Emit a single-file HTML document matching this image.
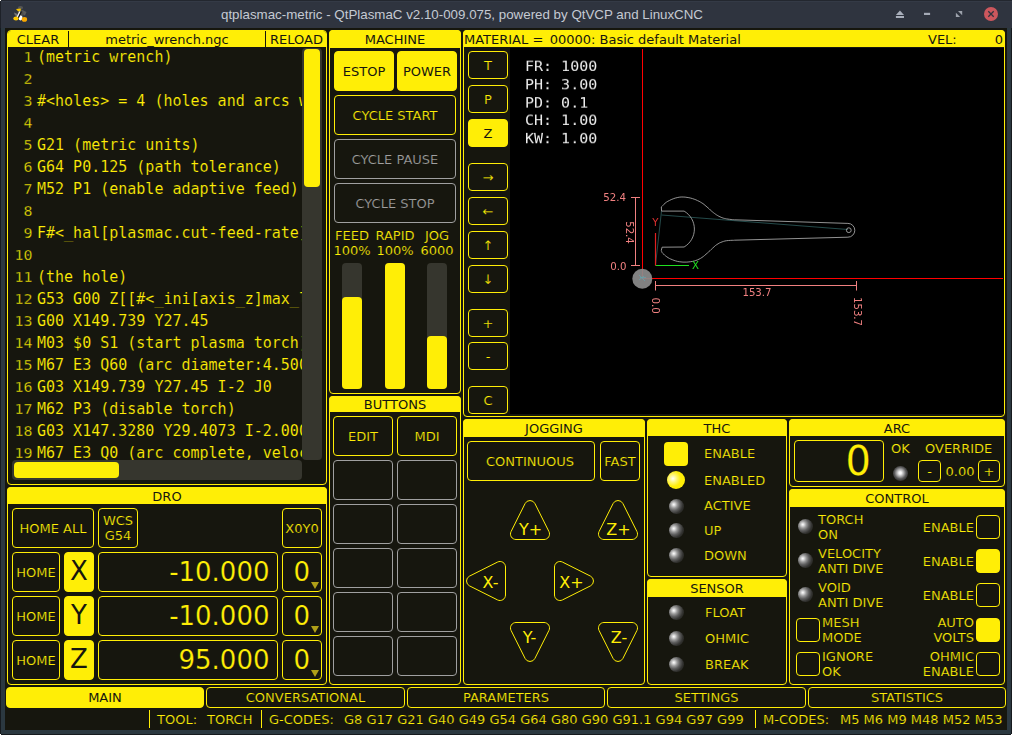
<!DOCTYPE html>
<html lang="en"><head><meta charset="utf-8"><title>qtplasmac-metric</title>
<style>
*{box-sizing:border-box;margin:0;padding:0}
html,body{width:1012px;height:735px;overflow:hidden;background:#2b3840}
body{-webkit-text-stroke:0.2px #16160e;position:relative;font-family:"DejaVu Sans","Liberation Sans",sans-serif;font-size:13px;color:#ffee06}
.a{position:absolute}
#tb{left:0;top:0;width:1012px;height:28px;background:#2f343f}
#title{-webkit-text-stroke:0;left:0;top:0;width:924px;height:28px;line-height:30px;text-align:center;color:#c5cad3;font-family:"Liberation Sans",sans-serif;font-size:13.33px}
#win{left:5px;top:28px;width:1002px;height:702px;background:#16160e}
.p{position:absolute;border:1px solid #ffee06;border-radius:4px}
.h{-webkit-text-stroke-width:0;position:absolute;left:-1px;top:-1px;right:-1px;background:#ffee06;color:#16160e;text-align:center;border-radius:4px 4px 0 0;white-space:pre}
.b{position:absolute;border:1px solid #ffee06;border-radius:4px;color:#ffee06;display:flex;align-items:center;justify-content:center;text-align:center;white-space:pre}
.b.on{background:#ffee06;color:#16160e;-webkit-text-stroke-width:0}
.b.dis{border-color:#a0a0a0;color:#a0a0a0}
.t{position:absolute;white-space:pre;line-height:15px}
.c{text-align:center}
.r{text-align:right}
.led{position:absolute;border-radius:50%;width:15px;height:15px;background:radial-gradient(circle at 32% 37%,#fff 0%,#dadada 10%,#9a9a9a 25%,#5e5e5e 44%,#343432 64%,#1f1f19 85%,#16160e 100%)}
.led.on{width:18px;height:18px;background:radial-gradient(circle at 33% 42%,#fff 0%,#fffcc0 10%,#fff670 25%,#ffee06 50%,#ffee06 100%)}
.code{-webkit-text-stroke-width:0.15px;font-family:"DejaVu Sans Mono","Liberation Mono",monospace;font-size:15px;line-height:22px;white-space:pre}
.ln{-webkit-text-stroke-width:0.35px;color:#f4e406;font-family:"DejaVu Sans Mono","Liberation Mono",monospace;font-size:15px;line-height:25px;white-space:pre;text-align:right;transform:scaleY(0.88);transform-origin:0 0}
</style></head>
<body>
<div class="a" id="tb"><div class="a" style="left:0;top:0;width:1012px;height:1px;background:#23272f"></div><div class="a" style="left:0;top:1px;width:1012px;height:1px;background:#343a46"></div><div class="a" style="left:0;top:0;width:1px;height:28px;background:#1d2128"></div><div class="a" style="left:0;top:0;width:1px;height:1px;background:#fff"></div><div class="a" id="title">qtplasmac-metric - QtPlasmaC v2.10-009.075, powered by QtVCP and LinuxCNC</div><svg class="a" style="left:0;top:0" width="40" height="28" viewBox="0 0 40 28">
<ellipse cx="20.5" cy="7.8" rx="2.6" ry="1.8" fill="#555"/>
<path d="M21.5 9.5 L26.5 12 L25 15.5 L21.5 14Z" fill="#5a5a5a"/>
<path d="M14 12.5 L17.5 14 L17 16.5 L14.8 15Z" fill="#777"/>
<ellipse cx="20.5" cy="14.5" rx="3" ry="4.5" fill="#4c4c4c"/>
<ellipse cx="20.5" cy="17.8" rx="2" ry="2.6" fill="#fff"/>
<path d="M16 9 L20.6 8.6 L21 10.6 L18.2 11.6Z" fill="#f5c400"/>
<path d="M17 17.5 L20 11.5" stroke="#f0f0f0" stroke-width="1.6"/>
<path d="M17.6 19.6 L21.4 11.6" stroke="#111" stroke-width="1.2"/>
<ellipse cx="16" cy="18.6" rx="2.7" ry="2" fill="#ffc800"/>
<ellipse cx="24.4" cy="19.4" rx="2.7" ry="2.3" fill="#f9a800"/>
</svg><svg class="a" style="left:881px;top:0" width="131" height="28" viewBox="0 0 131 28">
<path d="M14.9 15.1 L18.95 10.6 L23 15.1Z" fill="#a9afbb"/><rect x="14.9" y="16" width="8.1" height="2" fill="#a9afbb"/>
<rect x="43" y="12.8" width="6.1" height="2.2" fill="#a4aab6"/>
<path d="M76.98 11.07 L81.2 11.07 L81.2 15.16Z" fill="#9ea3ad"/><path d="M74.9 12.84 L74.9 17.06 L79.16 17.06Z" fill="#9ea3ad"/>
<circle cx="110" cy="14" r="7" fill="#cc575d"/>
<path d="M107.3 11.3 L112.7 16.7 M112.7 11.3 L107.3 16.7" stroke="#2f343f" stroke-width="1.3"/>
</svg></div>
<div class="a" id="win"></div>
<div class="a" style="left:0;top:28px;width:1px;height:707px;background:#161a1e"></div><div class="a" style="left:0;top:734px;width:1012px;height:1px;background:#161a1e"></div><div class="a" style="left:1011px;top:28px;width:1px;height:707px;background:#161a1e"></div><div class="a" style="left:0;top:734px;width:1px;height:1px;background:#fff"></div><div class="a" style="left:1011px;top:734px;width:1px;height:1px;background:#fff"></div>
<div class="p" style="left:7px;top:30px;width:320px;height:455px;overflow:hidden"><div class="h" style="height:17px;line-height:17px"></div><div class="a" style="left:60px;top:0;width:1px;height:17px;background:#16160e"></div><div class="a" style="left:257px;top:0;width:1px;height:17px;background:#16160e"></div><div class="t c" style="left:0;top:0;width:60px;color:#16160e;-webkit-text-stroke-width:0;line-height:17px">CLEAR</div><div class="t c" style="left:61px;top:0;width:196px;color:#16160e;-webkit-text-stroke-width:0;line-height:17px">metric_wrench.ngc</div><div class="t c" style="left:258px;top:0;width:61px;color:#16160e;-webkit-text-stroke-width:0;line-height:17px">RELOAD</div><div class="a" style="left:0;top:17px;width:293.5px;height:412px;overflow:hidden"><div class="a ln" style="left:0;top:-1.1px;width:24.5px">1
2
3
4
5
6
7
8
9
10
11
12
13
14
15
16
17
18
19</div><div class="a code" style="left:29px;top:-2px">(metric wrench)

#&lt;holes&gt; = 4 (holes and arcs with a diameter less than this get velocity reduction)

G21 (metric units)
G64 P0.125 (path tolerance)
M52 P1 (enable adaptive feed)

F#&lt;_hal[plasmac.cut-feed-rate]&gt; (feed rate from cut parameters)

(the hole)
G53 G00 Z[[#&lt;_ini[axis_z]max_limit&gt; - 5] * 1] (Z just below max height)
G00 X149.739 Y27.45
M03 $0 S1 (start plasma torch)
M67 E3 Q60 (arc diameter:4.500, velocity:60%)
G03 X149.739 Y27.45 I-2 J0
M62 P3 (disable torch)
G03 X147.3280 Y29.4073 I-2.0000 J0.0000
M67 E3 Q0 (arc complete, velocity 100%)</div></div><div class="a" style="left:294px;top:17px;width:20px;height:412px;background:#36362e;border-radius:4px"></div><div class="a" style="left:296px;top:18px;width:16px;height:138px;background:#ffee06;border-radius:4px"></div><div class="a" style="left:4px;top:429px;width:290px;height:20px;background:#36362e;border-radius:4px"></div><div class="a" style="left:5.8px;top:431px;width:105.2px;height:16px;background:#ffee06;border-radius:4px"></div></div>
<div class="p" style="left:329px;top:30px;width:132px;height:364px"><div class="h" style="height:18px;line-height:20px">MACHINE</div></div>
<div class="b on" style="left:334px;top:51px;width:60px;height:40px;">ESTOP</div>
<div class="b on" style="left:397px;top:51px;width:60px;height:40px;">POWER</div>
<div class="b " style="left:334px;top:95px;width:122px;height:40px;">CYCLE START</div>
<div class="b dis" style="left:334px;top:139px;width:122px;height:40px;">CYCLE PAUSE</div>
<div class="b dis" style="left:334px;top:183px;width:122px;height:40px;">CYCLE STOP</div>
<div class="t c" style="left:322px;top:228px;width:60px;">FEED</div>
<div class="t c" style="left:322px;top:243px;width:60px;">100%</div>
<div class="t c" style="left:365px;top:228px;width:60px;">RAPID</div>
<div class="t c" style="left:365px;top:243px;width:60px;">100%</div>
<div class="t c" style="left:407px;top:228px;width:60px;">JOG</div>
<div class="t c" style="left:407px;top:243px;width:60px;">6000</div>
<div class="a" style="left:342px;top:263px;width:20px;height:126px;background:#36362e;border-radius:4px"></div><div class="a" style="left:342px;top:297px;width:20px;height:92px;background:#ffee06;border-radius:4px"></div>
<div class="a" style="left:385px;top:263px;width:20px;height:126px;background:#36362e;border-radius:4px"></div><div class="a" style="left:385px;top:263px;width:20px;height:126px;background:#ffee06;border-radius:4px"></div>
<div class="a" style="left:427px;top:263px;width:20px;height:126px;background:#36362e;border-radius:4px"></div><div class="a" style="left:427px;top:336px;width:20px;height:53px;background:#ffee06;border-radius:4px"></div>
<div class="p" style="left:329px;top:396px;width:132px;height:289px"><div class="h" style="height:16px;line-height:17px">BUTTONS</div></div>
<div class="b " style="left:333px;top:416px;width:60px;height:40px;">EDIT</div>
<div class="b " style="left:397px;top:416px;width:60px;height:40px;">MDI</div>
<div class="b dis" style="left:333px;top:460px;width:60px;height:40px;"></div>
<div class="b dis" style="left:397px;top:460px;width:60px;height:40px;"></div>
<div class="b dis" style="left:333px;top:504px;width:60px;height:40px;"></div>
<div class="b dis" style="left:397px;top:504px;width:60px;height:40px;"></div>
<div class="b dis" style="left:333px;top:548px;width:60px;height:40px;"></div>
<div class="b dis" style="left:397px;top:548px;width:60px;height:40px;"></div>
<div class="b dis" style="left:333px;top:592px;width:60px;height:40px;"></div>
<div class="b dis" style="left:397px;top:592px;width:60px;height:40px;"></div>
<div class="b dis" style="left:333px;top:636px;width:60px;height:40px;"></div>
<div class="b dis" style="left:397px;top:636px;width:60px;height:40px;"></div>
<div class="p" style="left:463px;top:30px;width:542px;height:387px"><div class="h" style="height:17px;line-height:19px;overflow:hidden;text-align:left;padding-left:1px">MATERIAL =</div><div class="t" style="left:85.7px;top:0;color:#16160e;-webkit-text-stroke-width:0;line-height:17px">00000: Basic default Material</div><div class="t" style="left:464px;top:0;color:#16160e;-webkit-text-stroke-width:0;line-height:17px">VEL:</div><div class="t r" style="left:499px;top:0;width:40px;color:#16160e;-webkit-text-stroke-width:0;line-height:17px">0</div><div class="a" style="left:46px;top:17px;width:494px;height:366px;background:#000" id="pv"></div></div>
<div class="b " style="left:468px;top:51px;width:40px;height:28px;">T</div>
<div class="b " style="left:468px;top:85px;width:40px;height:28px;">P</div>
<div class="b on" style="left:468px;top:119px;width:40px;height:28px;">Z</div>
<div class="b " style="left:468px;top:163px;width:40px;height:28px;">→</div>
<div class="b " style="left:468px;top:197px;width:40px;height:28px;">←</div>
<div class="b " style="left:468px;top:231px;width:40px;height:28px;">↑</div>
<div class="b " style="left:468px;top:265px;width:40px;height:28px;">↓</div>
<div class="b " style="left:468px;top:309px;width:40px;height:28px;">+</div>
<div class="b " style="left:468px;top:342px;width:40px;height:28px;">-</div>
<div class="b " style="left:468px;top:386px;width:40px;height:28px;">C</div>
<div class="a" style="left:525px;top:57.7px;color:#ececec;-webkit-text-stroke:0;will-change:transform;font-family:'DejaVu Sans Mono','Liberation Mono',monospace;font-size:15px;line-height:20.8px;white-space:pre;transform:scaleY(0.87);transform-origin:0 0">FR: 1000
PH: 3.00
PD: 0.1
CH: 1.00
KW: 1.00</div>
<svg class="a" style="left:510px;top:49px" width="493" height="365" viewBox="510 49 493 365">
<path d="M642.5 49 V278.5 H1003" fill="none" stroke="#ff0000" stroke-width="1"/>
<path d="M655.5 265 L661.5 211 M661.5 215 L848 229.5" fill="none" stroke="#285252" stroke-width="0.9"/>
<path d="M661.3 207.0 L662.0 206.4 L662.8 205.5 L663.8 204.4 L665.0 203.3 L666.4 202.2 L667.8 201.3 L669.4 200.5 L671.2 199.6 L673.2 198.8 L675.2 198.1 L677.2 197.6 L679.2 197.2 L681.1 197.0 L683.1 197.0 L685.1 197.1 L687.0 197.4 L688.9 197.7 L690.7 198.1 L692.5 198.6 L694.2 199.2 L695.9 199.8 L697.5 200.6 L699.1 201.3 L700.5 202.1 L701.8 202.9 L702.9 203.6 L704.0 204.4 L705.0 205.3 L706.0 206.1 L707.0 207.0 L708.1 207.9 L709.2 208.9 L710.2 209.9 L711.3 210.9 L712.4 211.8 L713.5 212.7 L714.6 213.5 L715.7 214.3 L716.7 215.0 L717.8 215.6 L718.9 216.3 L720.0 216.8 L721.1 217.3 L722.1 217.7 L723.2 218.1 L724.3 218.4 L725.4 218.6 L726.6 218.9 L728.0 219.1 L729.5 219.3 L731.1 219.5 L732.5 219.6 L733.8 219.7 L734.7 219.8 L847.9 223.4 A6.9 6.9 0 0 1 847.9 237.2 L734.7 240.2 L733.6 240.3 L732.1 240.3 L730.3 240.4 L728.4 240.5 L726.5 240.7 L724.9 241.0 L723.5 241.4 L722.1 241.9 L720.8 242.4 L719.4 243.0 L718.1 243.8 L716.8 244.6 L715.4 245.6 L714.1 246.8 L712.7 248.1 L711.3 249.4 L710.0 250.7 L708.6 251.9 L707.3 253.1 L706.0 254.2 L704.7 255.4 L703.3 256.5 L701.9 257.5 L700.5 258.4 L699.0 259.2 L697.4 259.9 L695.8 260.5 L694.2 261.0 L692.5 261.4 L690.7 261.7 L688.9 261.9 L686.9 262.1 L685.0 262.1 L683.0 262.1 L681.0 261.9 L679.2 261.7 L677.4 261.4 L675.7 260.9 L674.0 260.4 L672.4 259.7 L670.8 259.1 L669.4 258.4 L668.1 257.7 L666.8 256.8 L665.6 255.9 L664.6 255.1 L663.7 254.2 L662.9 253.5 L662.3 252.8 L661.9 252.2 L661.7 251.6 L661.5 251.1 L661.4 250.6 L661.3 250.3 L662.1 247.2 L684.1 247.0 A20.8 20.8 0 0 0 684.1 211.1 L661.6 211.1 Z" fill="none" stroke="#acacac" stroke-width="0.85"/>
<circle cx="848.8" cy="230.2" r="2.4" fill="none" stroke="#acacac" stroke-width="0.85"/>
<path d="M655.5 265.5 H689" stroke="#20e020" stroke-width="1.2" fill="none"/>
<path d="M655.5 265.5 V233" stroke="#e02020" stroke-width="1.2" fill="none"/>
<g stroke="#f08080" stroke-width="1" fill="none"><path d="M635.5 197.5 V265.5 M631 197.5 H640 M631 265.5 H640 M655.5 285.5 H856.5 M655.5 281 V290.5 M856.5 281 V290.5"/></g>
<g fill="#f08080" font-family="DejaVu Sans,Liberation Sans,sans-serif" font-size="10.2px"><text x="626" y="201" text-anchor="end">52.4</text><text x="626.5" y="269.5" text-anchor="end">0.0</text><text x="757" y="295.5" text-anchor="middle">153.7</text><text transform="translate(625.5 232.5) rotate(90)" text-anchor="middle">52.4</text><text transform="translate(652 305.5) rotate(90)" text-anchor="middle">0.0</text><text transform="translate(853.5 311.5) rotate(90)" text-anchor="middle">153.7</text></g>
<text x="655.3" y="226" text-anchor="middle" fill="#e03030" font-family="DejaVu Sans,Liberation Sans,sans-serif" font-size="10.2px">Y</text><text x="695.5" y="269" text-anchor="middle" fill="#20e020" font-family="DejaVu Sans,Liberation Sans,sans-serif" font-size="10.2px">X</text>
<circle cx="642.3" cy="278.8" r="10" fill="#8c8c8c" fill-opacity="0.92"/>
<path d="M639 275 L645 281 M639 280 L644 276 M640 277.5 H646" stroke="#6aa0a8" stroke-width="0.8" fill="none"/>
</svg>
<div class="p" style="left:463px;top:419px;width:182px;height:266px"><div class="h" style="height:18px;line-height:20px">JOGGING</div></div>
<div class="b " style="left:467px;top:441px;width:128px;height:40px;padding-right:2px">CONTINUOUS</div>
<div class="b " style="left:600px;top:441px;width:40px;height:40px;">FAST</div>
<svg class="a" style="left:463px;top:490px" width="182" height="180" viewBox="463 490 182 180">
<g fill="none" stroke="#ffee06" stroke-width="1">
<path d="M525.08 503.57 A5.5 5.5 0 0 1 534.92 503.57 L548.93 531.54 A5.5 5.5 0 0 1 544.01 539.50 L515.99 539.50 A5.5 5.5 0 0 1 511.07 531.54 Z"/>
<path d="M613.08 503.57 A5.5 5.5 0 0 1 622.92 503.57 L636.93 531.54 A5.5 5.5 0 0 1 632.01 539.50 L603.99 539.50 A5.5 5.5 0 0 1 599.07 531.54 Z"/>
<path d="M469.57 585.92 A5.5 5.5 0 0 1 469.57 576.08 L497.54 562.07 A5.5 5.5 0 0 1 505.50 566.99 L505.50 595.01 A5.5 5.5 0 0 1 497.54 599.93 Z"/>
<path d="M554.50 566.99 A5.5 5.5 0 0 1 562.46 562.07 L590.43 576.08 A5.5 5.5 0 0 1 590.43 585.92 L562.46 599.93 A5.5 5.5 0 0 1 554.50 595.01 Z"/>
<path d="M511.07 630.46 A5.5 5.5 0 0 1 515.99 622.50 L544.01 622.50 A5.5 5.5 0 0 1 548.93 630.46 L534.92 658.43 A5.5 5.5 0 0 1 525.08 658.43 Z"/>
<path d="M599.07 630.46 A5.5 5.5 0 0 1 603.99 622.50 L632.01 622.50 A5.5 5.5 0 0 1 636.93 630.46 L622.92 658.43 A5.5 5.5 0 0 1 613.08 658.43 Z"/>
</g>
<g fill="#ffee06" font-family="DejaVu Sans,Liberation Sans,sans-serif" font-size="16px" text-anchor="middle">
<text x="530.5" y="535">Y+</text>
<text x="618.5" y="535">Z+</text>
<text x="490.5" y="587.5">X-</text>
<text x="571.5" y="587.5">X+</text>
<text x="529.5" y="643">Y-</text>
<text x="619" y="643">Z-</text>
</g></svg>
<div class="p" style="left:647px;top:419px;width:140px;height:158px"><div class="h" style="height:17px;line-height:19px">THC</div></div>
<div class="a" style="left:664px;top:442px;width:24px;height:24px;background:#ffee06;border-radius:4px"></div><div class="t " style="left:704px;top:446px;">ENABLE</div>
<div class="led on" style="left:667.0px;top:471.0px"></div>
<div class="t " style="left:704px;top:473px;">ENABLED</div>
<div class="led" style="left:668.5px;top:498.5px"></div>
<div class="t " style="left:704px;top:498px;">ACTIVE</div>
<div class="led" style="left:668.5px;top:522.5px"></div>
<div class="t " style="left:704px;top:523px;">UP</div>
<div class="led" style="left:668.5px;top:547.5px"></div>
<div class="t " style="left:704px;top:548px;">DOWN</div>
<div class="p" style="left:647px;top:579px;width:140px;height:106px"><div class="h" style="height:18px;line-height:20px">SENSOR</div></div>
<div class="led" style="left:669.0px;top:605.0px"></div>
<div class="t " style="left:705px;top:605px;">FLOAT</div>
<div class="led" style="left:669.0px;top:631.0px"></div>
<div class="t " style="left:705px;top:631px;">OHMIC</div>
<div class="led" style="left:669.0px;top:657.0px"></div>
<div class="t " style="left:705px;top:657px;">BREAK</div>
<div class="p" style="left:789px;top:419px;width:216px;height:68px"><div class="h" style="height:17px;line-height:19px">ARC</div></div>
<div class="b" style="left:794px;top:440px;width:90px;height:42px;justify-content:flex-end;padding-right:12px;font-size:40px">0</div><div class="t " style="left:891px;top:441px;">OK</div>
<div class="led" style="left:893px;top:465.5px;background:radial-gradient(circle at 48% 46%,#fff 0%,#f0f0f0 12%,#a8a8a8 32%,#5a5a5a 52%,#2a2a28 75%,#16160e 100%)"></div><div class="t " style="left:925px;top:441px;">OVERRIDE</div>
<div class="b " style="left:918px;top:460px;width:23px;height:22px;">-</div>
<div class="t c" style="left:942px;top:464px;width:36px;">0.00</div>
<div class="b " style="left:978px;top:460px;width:22px;height:22px;">+</div>
<div class="p" style="left:789px;top:489px;width:216px;height:196px"><div class="h" style="height:18px;line-height:20px">CONTROL</div></div>
<div class="led" style="left:798.0px;top:518.5px"></div>
<div class="t " style="left:818px;top:512px;">TORCH
ON</div>
<div class="t r" style="left:900px;top:520px;width:74px;">ENABLE</div>
<div class="b" style="left:976px;top:515px;width:24px;height:24px"></div>
<div class="led" style="left:798.0px;top:552.5px"></div>
<div class="t " style="left:818px;top:546px;">VELOCITY
ANTI DIVE</div>
<div class="t r" style="left:900px;top:554px;width:74px;">ENABLE</div>
<div class="b on" style="left:976px;top:549px;width:24px;height:24px"></div>
<div class="led" style="left:798.0px;top:586.5px"></div>
<div class="t " style="left:818px;top:580px;">VOID
ANTI DIVE</div>
<div class="t r" style="left:900px;top:588px;width:74px;">ENABLE</div>
<div class="b" style="left:976px;top:583px;width:24px;height:24px"></div>
<div class="b" style="left:796px;top:618px;width:24px;height:24px"></div>
<div class="t " style="left:822px;top:615px;">MESH
MODE</div>
<div class="t r" style="left:900px;top:615px;width:74px;">AUTO
VOLTS</div>
<div class="b on" style="left:976px;top:618px;width:24px;height:24px"></div>
<div class="b" style="left:796px;top:652px;width:24px;height:24px"></div>
<div class="t " style="left:822px;top:649px;">IGNORE
OK</div>
<div class="t r" style="left:900px;top:649px;width:74px;">OHMIC
ENABLE</div>
<div class="b" style="left:976px;top:652px;width:24px;height:24px"></div>
<div class="p" style="left:7px;top:487px;width:320px;height:198px"><div class="h" style="height:17px;line-height:19px">DRO</div></div>
<div class="b " style="left:12px;top:508px;width:82px;height:40px;">HOME ALL</div>
<div class="b " style="left:98px;top:508px;width:40px;height:40px;">WCS
G54</div>
<div class="b " style="left:282px;top:508px;width:40px;height:40px;">X0Y0</div>
<div class="b " style="left:12px;top:552px;width:48px;height:40px;">HOME</div>
<div class="b on" style="left:64px;top:552px;width:30px;height:40px;font-size:26px;padding-bottom:2px">X</div>
<div class="b" style="left:98px;top:552px;width:180px;height:40px;justify-content:flex-end;padding-right:7.5px;padding-bottom:1px;font-size:26px">-10.000</div>
<div class="b" style="left:282px;top:552px;width:40px;height:40px;font-size:26px;justify-content:flex-start;padding-left:10.5px;padding-bottom:1px">0<span class="a" style="right:2.5px;bottom:2.5px;width:0;height:0;border-left:4px solid transparent;border-right:4px solid transparent;border-top:7.5px solid #b0a018"></span></div>
<div class="b " style="left:12px;top:596px;width:48px;height:40px;">HOME</div>
<div class="b on" style="left:64px;top:596px;width:30px;height:40px;font-size:26px;padding-bottom:2px">Y</div>
<div class="b" style="left:98px;top:596px;width:180px;height:40px;justify-content:flex-end;padding-right:7.5px;padding-bottom:1px;font-size:26px">-10.000</div>
<div class="b" style="left:282px;top:596px;width:40px;height:40px;font-size:26px;justify-content:flex-start;padding-left:10.5px;padding-bottom:1px">0<span class="a" style="right:2.5px;bottom:2.5px;width:0;height:0;border-left:4px solid transparent;border-right:4px solid transparent;border-top:7.5px solid #b0a018"></span></div>
<div class="b " style="left:12px;top:640px;width:48px;height:40px;">HOME</div>
<div class="b on" style="left:64px;top:640px;width:30px;height:40px;font-size:26px;padding-bottom:2px">Z</div>
<div class="b" style="left:98px;top:640px;width:180px;height:40px;justify-content:flex-end;padding-right:7.5px;padding-bottom:1px;font-size:26px">95.000</div>
<div class="b" style="left:282px;top:640px;width:40px;height:40px;font-size:26px;justify-content:flex-start;padding-left:10.5px;padding-bottom:1px">0<span class="a" style="right:2.5px;bottom:2.5px;width:0;height:0;border-left:4px solid transparent;border-right:4px solid transparent;border-top:7.5px solid #b0a018"></span></div>
<div class="b on" style="left:6px;top:687px;width:198px;height:21px;">MAIN</div>
<div class="b " style="left:206px;top:687px;width:199px;height:21px;">CONVERSATIONAL</div>
<div class="b " style="left:407px;top:687px;width:198px;height:21px;">PARAMETERS</div>
<div class="b " style="left:607px;top:687px;width:199px;height:21px;">SETTINGS</div>
<div class="b " style="left:808px;top:687px;width:198px;height:21px;">STATISTICS</div>
<div class="a" style="left:194.5px;top:717.5px;width:1.2px;height:1.2px;background:#b0a810"></div><div class="a" style="left:149px;top:710px;width:1px;height:18px;background:#ffee06"></div><div class="a" style="left:261px;top:710px;width:1px;height:18px;background:#ffee06"></div><div class="a" style="left:755px;top:710px;width:1px;height:18px;background:#ffee06"></div><div class="t " style="left:157px;top:712px;">TOOL:</div>
<div class="t " style="left:207px;top:712px;">TORCH</div>
<div class="t " style="left:269px;top:712px;">G-CODES:</div>
<div class="t " style="left:344px;top:712px;">G8 G17 G21 G40 G49 G54 G64 G80 G90 G91.1 G94 G97 G99</div>
<div class="t " style="left:763px;top:712px;">M-CODES:</div>
<div class="t " style="left:840px;top:712px;">M5 M6 M9 M48 M52 M53</div>
</body></html>
